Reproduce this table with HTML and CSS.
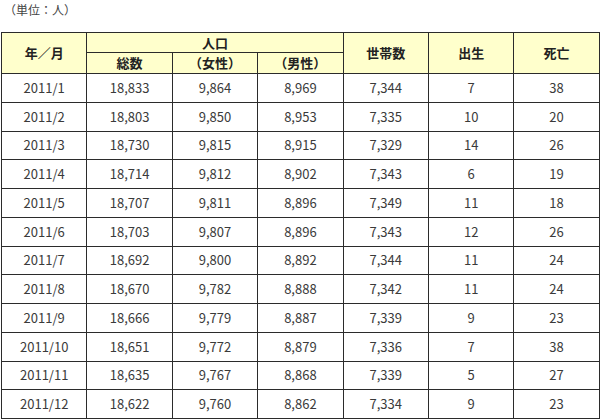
FILE: index.html
```html
<!DOCTYPE html>
<html lang="ja">
<head>
<meta charset="utf-8">
<link rel="stylesheet" href="styles.css">
</head>
<body>
<div class="page">
  <p class="unit">（単位：人）</p>
  <table class="stats">
    <colgroup>
      <col><col><col><col><col><col><col>
    </colgroup>
    <thead>
      <tr class="h1">
        <th rowspan="2">年／月</th>
        <th colspan="3">人口</th>
        <th rowspan="2">世帯数</th>
        <th rowspan="2">出生</th>
        <th rowspan="2">死亡</th>
      </tr>
      <tr class="h2">
        <th>総数</th>
        <th>（女性）</th>
        <th>（男性）</th>
      </tr>
    </thead>
    <tbody>
      <tr><td>2011/1</td><td>18,833</td><td>9,864</td><td>8,969</td><td>7,344</td><td>7</td><td>38</td></tr>
      <tr><td>2011/2</td><td>18,803</td><td>9,850</td><td>8,953</td><td>7,335</td><td>10</td><td>20</td></tr>
      <tr><td>2011/3</td><td>18,730</td><td>9,815</td><td>8,915</td><td>7,329</td><td>14</td><td>26</td></tr>
      <tr><td>2011/4</td><td>18,714</td><td>9,812</td><td>8,902</td><td>7,343</td><td>6</td><td>19</td></tr>
      <tr><td>2011/5</td><td>18,707</td><td>9,811</td><td>8,896</td><td>7,349</td><td>11</td><td>18</td></tr>
      <tr><td>2011/6</td><td>18,703</td><td>9,807</td><td>8,896</td><td>7,343</td><td>12</td><td>26</td></tr>
      <tr><td>2011/7</td><td>18,692</td><td>9,800</td><td>8,892</td><td>7,344</td><td>11</td><td>24</td></tr>
      <tr><td>2011/8</td><td>18,670</td><td>9,782</td><td>8,888</td><td>7,342</td><td>11</td><td>24</td></tr>
      <tr><td>2011/9</td><td>18,666</td><td>9,779</td><td>8,887</td><td>7,339</td><td>9</td><td>23</td></tr>
      <tr><td>2011/10</td><td>18,651</td><td>9,772</td><td>8,879</td><td>7,336</td><td>7</td><td>38</td></tr>
      <tr><td>2011/11</td><td>18,635</td><td>9,767</td><td>8,868</td><td>7,339</td><td>5</td><td>27</td></tr>
      <tr><td>2011/12</td><td>18,622</td><td>9,760</td><td>8,862</td><td>7,334</td><td>9</td><td>23</td></tr>
    </tbody>
  </table>
</div>
</body>
</html>
```
FILE: styles.css
```css
html, body {
  margin: 0;
  padding: 0;
  background: #fff;
}
body {
  font-family: "Noto Sans CJK JP", "Noto Sans", sans-serif;
  color: #333;
}
.page {
  padding: 0 0 0 1px;
}
.unit {
  margin: 0;
  height: 32px;
  padding: 2px 0 0 3px;
  box-sizing: border-box;
  font-size: 12px;
  line-height: 16px;
  color: #444;
}
.stats {
  border-collapse: collapse;
  table-layout: fixed;
  width: 598px;
}
.stats col {
  width: 85.4px;
}
.stats th,
.stats td {
  border: 1px solid #2b2b2b;
  text-align: center;
  padding: 0;
  font-size: 13px;
}
.stats th {
  background: #ffffcc;
  font-weight: 700;
  color: #222;
  line-height: 16px;
}
.stats .h1 th {
  height: 19px;
}
.stats .h2 th {
  height: 20px;
}
.stats td {
  height: 27.75px;
  font-weight: 400;
  color: #3a3a3a;
  line-height: 16px;
}
```
